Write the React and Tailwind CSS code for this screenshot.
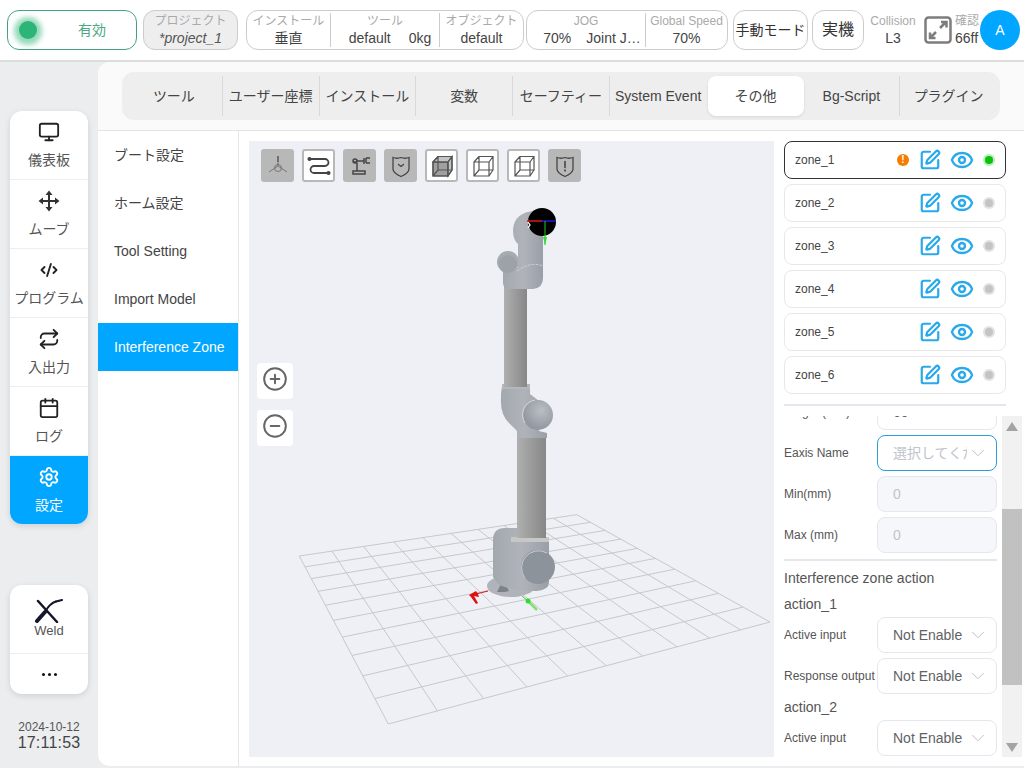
import React from 'react';
import { Monitor, CodeXml, Repeat, Calendar, Settings, SquarePen, Eye, ChevronDown, CirclePlus, CircleMinus } from 'lucide-react';

const tabs = ['ツール', 'ユーザー座標', 'インストール', '変数', 'セーフティー', 'System Event', 'その他', 'Bg-Script', 'プラグイン'];
const menuItems = ['ブート設定', 'ホーム設定', 'Tool Setting', 'Import Model', 'Interference Zone'];
const zones = ['zone_1', 'zone_2', 'zone_3', 'zone_4', 'zone_5', 'zone_6'];

// Cross-shaped move icon with solid arrow heads
function MoveIcon() {
  return (
    <svg width="22" height="22" viewBox="0 0 22 22" fill="#333" className="text-[#333]">
      <path d="M11 3v16M3 11h16" stroke="#333" strokeWidth="2" />
      <path d="M11 0.500 14.500 5h-7zM11 21.500 7.500 17h7zM0.500 11 5 7.500v7zM21.500 11 17 14.500v-7z" />
    </svg>
  );
}

// Welding torch crossed with a wire
function WeldIcon() {
  return (
    <svg width="28" height="24" viewBox="0 0 28 24" fill="none" stroke="#16162a" strokeLinecap="round">
      <path d="M3 2 22 23" strokeWidth="2.500" />
      <path d="M2 22 10 13" strokeWidth="4" />
      <path d="M10 13 Q 15 4 21 2.500" strokeWidth="2" />
      <path d="M21 2.500 27 1" strokeWidth="2" />
    </svg>
  );
}

function ExpandIcon() {
  return (
    <svg width="28" height="28" viewBox="0 0 28 28" fill="none" stroke="#7d7d7d" strokeWidth="2.500">
      <rect x="1.500" y="1.500" width="25" height="25" rx="3" />
      <path d="M16 12 22 6M17 6h5.500v5.500M12 16 6 22M6 16.500V22h5.500" />
    </svg>
  );
}

// Small 3D view toolbar glyphs
function AxisGlyph() {
  return (
    <svg width="24" height="24" viewBox="0 0 24 24" fill="none" stroke="#666" strokeWidth="0.800">
      <path d="M12 2v10M12 12 3 18M12 12l9 6" />
      <path d="M12 2v6" strokeWidth="1.600" />
      <circle cx="12" cy="14" r="3.500" />
    </svg>
  );
}

function PathGlyph() {
  return (
    <svg width="24" height="24" viewBox="0 0 24 24" fill="none" stroke="#444" strokeWidth="1.800" strokeLinecap="round">
      <path d="M2 5h16a3.500 3.500 0 0 1 0 7H7a3.500 3.500 0 0 0 0 7h15" />
      <circle cx="2.500" cy="5" r="1.200" fill="#444" />
      <circle cx="21.500" cy="19" r="1.200" fill="#444" />
    </svg>
  );
}

function RobotGlyph() {
  return (
    <svg width="24" height="24" viewBox="0 0 24 24" fill="none" stroke="#444" strokeWidth="1.500">
      <path d="M5 20h12v-3H5zM9 17V9M6 8h3M9 7h7" />
      <circle cx="7" cy="7" r="2" />
      <path d="M16 4v6M18 4h4M18 9h4M18 4v5" />
    </svg>
  );
}

function ShieldGlyph({ mark }) {
  return (
    <svg width="24" height="24" viewBox="0 0 24 24" fill="none" stroke="#444" strokeWidth="1.300" strokeLinecap="round">
      <path d="M4 3.500q4 1.500 8 0q4 1.500 8 0V15q0 4-8 7.500Q4 19 4 15z" />
      {mark === 'check' ? (
        <path d="M9.500 10.500 12 12.500l2.500-2" />
      ) : (
        <path d="M12 7.500v6M12 16v1" strokeWidth="1.600" />
      )}
    </svg>
  );
}

function BoxGlyph({ filled }) {
  return (
    <svg width="24" height="24" viewBox="0 0 24 24" fill="none" stroke="#555" strokeWidth="1.200">
      {filled && <path d="M3 8h15v14H3z" fill="#a0a0a0" />}
      {filled && <path d="M3 8l5-5.500h14L18 8zM18 8l4-5.500V16l-4 6z" fill="#c4c4c4" />}
      <path d="M3 8h15v14H3zM8 2.500h14V16H8zM3 8l5-5.500M18 8l4-5.500M18 22l4-6M3 22l5-6" />
    </svg>
  );
}

const toolButtons = [
  { active: true, glyph: <AxisGlyph /> },
  { active: false, glyph: <PathGlyph /> },
  { active: true, glyph: <RobotGlyph /> },
  { active: true, glyph: <ShieldGlyph mark="check" /> },
  { active: false, glyph: <BoxGlyph filled /> },
  { active: false, glyph: <BoxGlyph /> },
  { active: false, glyph: <BoxGlyph /> },
  { active: true, glyph: <ShieldGlyph mark="warn" /> },
];

// Maps the unit square onto the grid's four corners
function makeProjector(q) {
  const [[x0, y0], [x1, y1], [x2, y2], [x3, y3]] = q;
  const sx = x0 - x1 + x2 - x3;
  const sy = y0 - y1 + y2 - y3;
  const dx1 = x1 - x2;
  const dx2 = x3 - x2;
  const dy1 = y1 - y2;
  const dy2 = y3 - y2;
  const det = dx1 * dy2 - dx2 * dy1;
  const g = (sx * dy2 - dx2 * sy) / det;
  const h = (dx1 * sy - sx * dy1) / det;
  const a = x1 - x0 + g * x1;
  const b = x3 - x0 + h * x3;
  const d = y1 - y0 + g * y1;
  const e = y3 - y0 + h * y3;
  return (u, v) => {
    const w = g * u + h * v + 1;
    return [(a * u + b * v + x0) / w, (d * u + e * v + y0) / w];
  };
}

function gridPath() {
  const project = makeProjector([[299.300, 556], [576.700, 514.700], [770, 622], [388.300, 724]]);
  let path = '';
  for (let i = 0; i <= 10; i++) {
    const t = i / 10;
    const [ax, ay] = project(t, 0);
    const [bx, by] = project(t, 1);
    const [cx, cy] = project(0, t);
    const [ex, ey] = project(1, t);
    path += `M${ax} ${ay}L${bx} ${by}M${cx} ${cy}L${ex} ${ey}`;
  }
  return path;
}

// The robot arm and floor grid, in page coordinates
function RobotScene() {
  return (
    <svg width="525" height="616" viewBox="249 141 525 616" className="absolute left-0 top-0">
      <defs>
        <linearGradient id="tube" x1="0" x2="1" y1="0" y2="0">
          <stop offset="0" stopColor="#b0b0b0" />
          <stop offset="0.500" stopColor="#9b9b9b" />
          <stop offset="1" stopColor="#878787" />
        </linearGradient>
        <linearGradient id="body" x1="0" x2="1" y1="0" y2="0">
          <stop offset="0" stopColor="#a3a8af" />
          <stop offset="0.500" stopColor="#b0b4ba" />
          <stop offset="1" stopColor="#9a9fa7" />
        </linearGradient>
        <radialGradient id="ball" cx="0.600" cy="0.350" r="0.700">
          <stop offset="0" stopColor="#babec4" />
          <stop offset="1" stopColor="#8e939b" />
        </radialGradient>
      </defs>

      <path d={gridPath()} stroke="#c6c8c9" strokeWidth="1" fill="none" />

      {/* floor axes */}
      <path d="M488 591 472 595" stroke="#e01010" strokeWidth="1" />
      <path d="M469 595l7-4 2 3 1 3-5-1 4 7-2 1-5-7z" fill="#e01010" />
      <path d="M522 596 528 601" stroke="#35d835" strokeWidth="1" />
      <path d="M528 601 537 610" stroke="#86e070" strokeWidth="2.500" />
      <circle cx="528" cy="601" r="2.500" fill="#2fdc2f" />

      {/* base */}
      <ellipse cx="511" cy="586" rx="24" ry="11" fill="#b0b4ba" />
      <path d="M500 592l-3 0 6-12 6 11-4 1z" fill="#7c8087" />
      <path d="M493 540q0-12 12-12h12v10h32v12l0 32q0 8-12 9h-20l-18-6-6-8z" fill="url(#body)" />
      <rect x="511" y="537" width="38" height="5" fill="#c6c8c6" />
      <ellipse cx="538" cy="567" rx="17" ry="17" fill="#8d939b" />
      <path d="M525 578a17 17 0 0 1 22-25" stroke="#c9ccd0" strokeWidth="1" fill="none" />

      {/* lower arm */}
      <rect x="517" y="434" width="29" height="104" fill="url(#tube)" />

      {/* elbow */}
      <path d="M502 386h28v8l9 7v30l8 2v5h-30v-7l-8-8q-9-9-8-25v-4z" fill="url(#body)" />
      <rect x="502" y="384" width="28" height="5" fill="#b4b8bd" />
      <circle cx="538" cy="415" r="15" fill="url(#ball)" />
      <path d="M525 423a15 15 0 0 1 10-23" stroke="#d4d6d9" strokeWidth="1" fill="none" />

      {/* upper arm */}
      <rect x="504" y="279" width="23" height="108" fill="url(#tube)" />

      {/* wrist */}
      <circle cx="508" cy="262" r="11" fill="#a6abb2" />
      <path d="M503 268h15v-24q-5-4-5-14q1-18 22-19l8 15v52q0 10-10 11h-24q-6-1-6-6z" fill="url(#body)" />
      <circle cx="508" cy="264" r="9" fill="#9da2a9" />
      <path d="M517 271q14-10 26-5" stroke="#d8dadd" strokeWidth="0.700" strokeDasharray="3 1" fill="none" />

      {/* tool flange with its axes */}
      <circle cx="542" cy="222" r="14" fill="#000" />
      <path d="M527 221h15" stroke="#e01414" strokeWidth="1.500" />
      <path d="M542 221h14" stroke="#1a1ae0" strokeWidth="1.500" />
      <path d="M545 221v24" stroke="#18c818" strokeWidth="1" />
      <path d="M543 237h4l-2 8z" fill="#2fe02f" />
      <path d="M528 222l2 3-2 3" stroke="#fff" strokeWidth="1.300" fill="none" />
    </svg>
  );
}

// One labelled value in the header groups
function StatusCell({ label, className, children }) {
  return (
    <div className={`flex flex-col items-center justify-center ${className}`}>
      <span className="text-[12px] leading-[16px] text-[#aaaaaa] whitespace-nowrap">{label}</span>
      <span className="text-[14px] leading-[18px] text-[#444] whitespace-nowrap flex">{children}</span>
    </div>
  );
}

function Header() {
  return (
    <div className="h-[62px] bg-white border-b-2 border-[#dddddd] flex items-center pl-[7px] box-border">
      {/* Enable switch */}
      <div className="w-[130px] h-[40px] rounded-xl border border-[#43a381] flex items-center shrink-0">
        <div className="ml-[11px] w-[18px] h-[18px] rounded-full bg-[#2db577] shadow-[0_1px_5px_5px_rgba(45,181,119,0.5)]"></div>
        <span className="ml-[41px] text-[14px] text-[#4aa982]">有効</span>
      </div>

      <div className="ml-[6px] w-[95px] h-[40px] rounded-xl border border-[#cccccc] bg-[#eeeeee] flex flex-col items-center justify-center shrink-0">
        <span className="text-[12px] leading-[16px] text-[#aaaaaa]">プロジェクト</span>
        <span className="text-[14px] leading-[18px] italic text-[#555]">*project_1</span>
      </div>

      <div className="ml-[8px] w-[278px] h-[40px] rounded-xl border border-[#cccccc] flex items-center shrink-0">
        <StatusCell label="インストール" className="w-[84px] border-r border-[#cccccc]">垂直</StatusCell>
        <StatusCell label="ツール" className="w-[109px] border-r border-[#cccccc]">
          <span className="ml-[10px]">default</span>
          <span className="ml-[18px]">0kg</span>
        </StatusCell>
        <StatusCell label="オブジェクト" className="w-[83px]">default</StatusCell>
      </div>

      <div className="ml-[2px] w-[202px] h-[40px] rounded-xl border border-[#cccccc] flex items-center shrink-0">
        <StatusCell label="JOG" className="w-[119px] border-r border-[#cccccc]">
          <span className="ml-[12px]">70%</span>
          <span className="ml-[15px]">Joint J…</span>
        </StatusCell>
        <StatusCell label="Global Speed" className="w-[81px]">70%</StatusCell>
      </div>

      <div className="ml-[5px] w-[75px] h-[40px] rounded-xl border border-[#cccccc] flex items-center justify-center overflow-hidden shrink-0">
        <span className="text-[14px] text-[#333] whitespace-nowrap">手動モード</span>
      </div>
      <div className="ml-[4px] w-[52px] h-[40px] rounded-xl border border-[#cccccc] flex items-center justify-center shrink-0">
        <span className="text-[16px] text-[#333]">実機</span>
      </div>

      <StatusCell label="Collision" className="ml-[6px] w-[46px] shrink-0">L3</StatusCell>

      <div className="ml-[8px] shrink-0">
        <ExpandIcon />
      </div>
      <div className="ml-[3px] w-[25px] flex flex-col overflow-hidden shrink-0">
        <span className="text-[12px] leading-[16px] text-[#aaaaaa] whitespace-nowrap">確認</span>
        <span className="text-[14px] leading-[18px] text-[#444] whitespace-nowrap">66ff</span>
      </div>
      <div className="w-[40px] h-[40px] rounded-full bg-[#00a6ff] flex items-center justify-center text-white text-[14px] shrink-0">A</div>
    </div>
  );
}

// Single entry of the left navigation
function NavItem({ icon, label, active, last }) {
  return (
    <div className={`flex flex-col items-center pt-[10px] ${last ? 'h-[68px]' : 'h-[69px] border-b border-[#eeeeee]'} ${active ? 'bg-[#00a6ff] text-white' : 'text-[#555]'}`}>
      <div className={`h-[22px] flex items-center ${active ? 'text-white' : 'text-[#222]'}`}>{icon}</div>
      <span className="text-[14px] leading-[20px] mt-[7px] whitespace-nowrap">{label}</span>
    </div>
  );
}

function Sidebar() {
  return (
    <div className="w-[98px] shrink-0 flex flex-col pl-[10px] pr-[10px]">
      <div className="mt-[49px] bg-white rounded-xl overflow-hidden shadow-[0_2px_6px_rgba(0,0,0,0.12)]">
        <NavItem icon={<Monitor size={22} strokeWidth={2} />} label="儀表板" />
        <NavItem icon={<MoveIcon />} label="ムーブ" />
        <NavItem icon={<CodeXml size={18} strokeWidth={2.500} />} label="プログラム" />
        <NavItem icon={<Repeat size={22} strokeWidth={2} />} label="入出力" />
        <NavItem icon={<Calendar size={22} strokeWidth={2} />} label="ログ" />
        <NavItem icon={<Settings size={22} strokeWidth={2} />} label="設定" active last />
      </div>

      <div className="mt-[61px] bg-white rounded-xl overflow-hidden shadow-[0_2px_6px_rgba(0,0,0,0.12)]">
        <div className="h-[69px] flex flex-col items-center pt-[14px] border-b border-[#eeeeee]">
          <WeldIcon />
          <span className="text-[13px] leading-[16px] text-[#555]">Weld</span>
        </div>
        <div className="h-[40px] flex items-center justify-center gap-[3px]">
          <span className="w-[3px] h-[3px] rounded-full bg-[#111]"></span>
          <span className="w-[3px] h-[3px] rounded-full bg-[#111]"></span>
          <span className="w-[3px] h-[3px] rounded-full bg-[#111]"></span>
        </div>
      </div>

      <div className="mt-[25px] flex flex-col items-center">
        <span className="text-[12px] leading-[16px] text-[#555]">2024-10-12</span>
        <span className="text-[16px] leading-[16px] tracking-[0.2px] text-[#444]">17:11:53</span>
      </div>
    </div>
  );
}

function TabBar() {
  return (
    <div className="h-[69px] bg-[#fafafa] border-b border-[#e4e4e4] pl-[24px] pt-[10px] box-border">
      <div className="w-[878px] h-[48px] bg-[#eeeeee] rounded-xl flex items-center pl-[4px]">
        {tabs.map((tab, i) => {
          let tabClass = 'w-[96.75px] border-r border-[#d9d9d9]';
          if (i === 5) tabClass = 'w-[96.75px]';
          if (i === 6) tabClass = 'w-[96px] ml-[1px] bg-white rounded-lg shadow-[0_1px_3px_rgba(0,0,0,0.1)]';
          if (i === 8) tabClass = 'w-[96.75px]';
          return (
            <div key={tab} className={`h-[40px] flex items-center justify-center text-[14px] text-[#444] whitespace-nowrap shrink-0 ${tabClass}`}>
              {tab}
            </div>
          );
        })}
      </div>
    </div>
  );
}

function SubMenu() {
  return (
    <div className="w-[141px] shrink-0 border-r border-[#e6e6e6]">
      {menuItems.map((item, i) => (
        <div
          key={item}
          className={`w-[140px] h-[48px] flex items-center pl-[16px] text-[14px] whitespace-nowrap ${i === 4 ? 'bg-[#00a6ff] text-white' : 'text-[#444]'}`}
        >
          {item}
        </div>
      ))}
    </div>
  );
}

function Viewer() {
  return (
    <div className="relative w-[525px] h-[616px] bg-[#eef0f5] overflow-hidden shrink-0">
      <RobotScene />

      {/* display toggles */}
      <div className="absolute left-[12px] top-[8px] flex gap-[8px]">
        {toolButtons.map((btn, i) => (
          <div
            key={i}
            className={`w-[33px] h-[33px] rounded-[3px] flex items-center justify-center ${btn.active ? 'bg-[#b8b8b8]' : 'bg-white border-2 border-[#b8b8b8]'}`}
          >
            {btn.glyph}
          </div>
        ))}
      </div>

      {/* zoom buttons */}
      <div className="absolute left-[8px] top-[222px] flex flex-col gap-[11px]">
        <div className="w-[36px] h-[36px] pb-[5px] bg-white rounded-[4px] flex items-center justify-center text-[#666]">
          <CirclePlus size={26} strokeWidth={1.800} />
        </div>
        <div className="w-[36px] h-[36px] pb-[5px] bg-white rounded-[4px] flex items-center justify-center text-[#666]">
          <CircleMinus size={26} strokeWidth={1.800} />
        </div>
      </div>
    </div>
  );
}

function ZoneRow({ name, active }) {
  return (
    <div className={`h-[38px] rounded-lg border flex items-center pl-[10px] ${active ? 'border-[#333]' : 'border-[#e8e8e8]'}`}>
      <span className="text-[12px] text-[#444]">{name}</span>
      <div className="ml-auto flex items-center">
        {active && (
          <span className="w-[12px] h-[12px] rounded-full bg-[#f57c00] mr-[10px] flex items-center justify-center text-white text-[10px] font-bold leading-none">!</span>
        )}
        <SquarePen size={22} strokeWidth={2.400} className="text-[#29a9ea] mr-[9px]" />
        <Eye size={24} strokeWidth={2.400} className="text-[#29a9ea] mr-[9px]" />
        <span className={`w-[12px] h-[12px] rounded-full mr-[10px] flex items-center justify-center ${active ? 'bg-[#b8ecb8]' : 'bg-[#e2e2e2]'}`}>
          <span className={`w-[8px] h-[8px] rounded-full ${active ? 'bg-[#0cc00c]' : 'bg-[#c4c4c4]'}`}></span>
        </span>
      </div>
    </div>
  );
}

// Label plus a select or input box
function FormRow({ label, value, placeholder, disabled, focused, select }) {
  let boxClass = 'border-[#e4e7ed]';
  if (disabled) boxClass = 'border-[#e4e7ed] bg-[#f5f7fa]';
  if (focused) boxClass = 'border-[#2a9fd8]';
  return (
    <div className="flex items-center h-[36px]">
      <span className="w-[93px] text-[12px] text-[#555] whitespace-nowrap">{label}</span>
      <div className={`w-[120px] h-[36px] rounded-lg border flex items-center pl-[15px] pr-[7px] ${boxClass}`}>
        <span className={`text-[14px] whitespace-nowrap overflow-hidden flex-1 ${placeholder || disabled ? 'text-[#c0c4cc]' : 'text-[#606266]'}`}>
          {placeholder || value}
        </span>
        {select && <ChevronDown size={22} strokeWidth={1} className="text-[#bbbbbb] shrink-0" />}
      </div>
    </div>
  );
}

function ScrollBar() {
  return (
    <div className="w-[20px] h-[341px] bg-[#f1f1f1] flex flex-col items-center shrink-0">
      <div className="h-[20px] flex items-center justify-center">
        <div className="w-0 h-0 border-l-[6px] border-r-[6px] border-b-[9px] border-l-transparent border-r-transparent border-b-[#a3a3a3]"></div>
      </div>
      <div className="w-full h-[176px] bg-[#c1c1c1] mt-[73px]"></div>
      <div className="h-[20px] mt-auto flex items-center justify-center">
        <div className="w-0 h-0 border-l-[6px] border-r-[6px] border-t-[9px] border-l-transparent border-r-transparent border-t-[#a3a3a3]"></div>
      </div>
    </div>
  );
}

function ZonePanel() {
  return (
    <div className="w-[250px] shrink-0 pl-[10px]">
      <div className="w-[222px] flex flex-col gap-[5px]">
        {zones.map((zone, i) => (
          <ZoneRow key={zone} name={zone} active={i === 0} />
        ))}
      </div>
      <div className="w-[222px] h-[2px] bg-[#e4e7ed] mt-[10px]"></div>

      <div className="mt-[10px] h-[341px] flex">
        <div className="w-[218px] h-[341px] overflow-hidden shrink-0">
          <div className="w-[213px] -mt-[22px] flex flex-col">
            <FormRow label="Height (mm)" value="60" />
            <div className="mt-[5px]">
              <FormRow label="Eaxis Name" placeholder="選択してください" focused select />
            </div>
            <div className="mt-[5px]">
              <FormRow label="Min(mm)" value="0" disabled />
            </div>
            <div className="mt-[5px]">
              <FormRow label="Max (mm)" value="0" disabled />
            </div>
            <div className="h-[2px] bg-[#e4e7ed] mt-[6px]"></div>
            <div className="mt-[7px] text-[14px] leading-[20px] text-[#555]">Interference zone action</div>
            <div className="mt-[6px] text-[14px] leading-[20px] text-[#555]">action_1</div>
            <div className="mt-[3px]">
              <FormRow label="Active input" value="Not Enable" select />
            </div>
            <div className="mt-[5px]">
              <FormRow label="Response output" value="Not Enable" select />
            </div>
            <div className="mt-[3px] text-[14px] leading-[20px] text-[#555]">action_2</div>
            <div className="mt-[3px]">
              <FormRow label="Active input" value="Not Enable" select />
            </div>
          </div>
        </div>
        <ScrollBar />
      </div>
    </div>
  );
}

export default function App() {
  return (
    <div className="w-[1024px] h-[768px] overflow-hidden bg-[#ebedef] font-['Liberation_Sans','Noto_Sans_CJK_JP',sans-serif]">
      <Header />
      <div className="flex h-[706px]">
        <Sidebar />
        <div className="w-[926px] h-[704px] bg-white rounded-l-xl overflow-hidden">
          <TabBar />
          <div className="flex h-[635px]">
            <SubMenu />
            <div className="pl-[10px] pt-[10px]">
              <Viewer />
            </div>
            <div className="pt-[10px]">
              <ZonePanel />
            </div>
          </div>
        </div>
      </div>
    </div>
  );
}
